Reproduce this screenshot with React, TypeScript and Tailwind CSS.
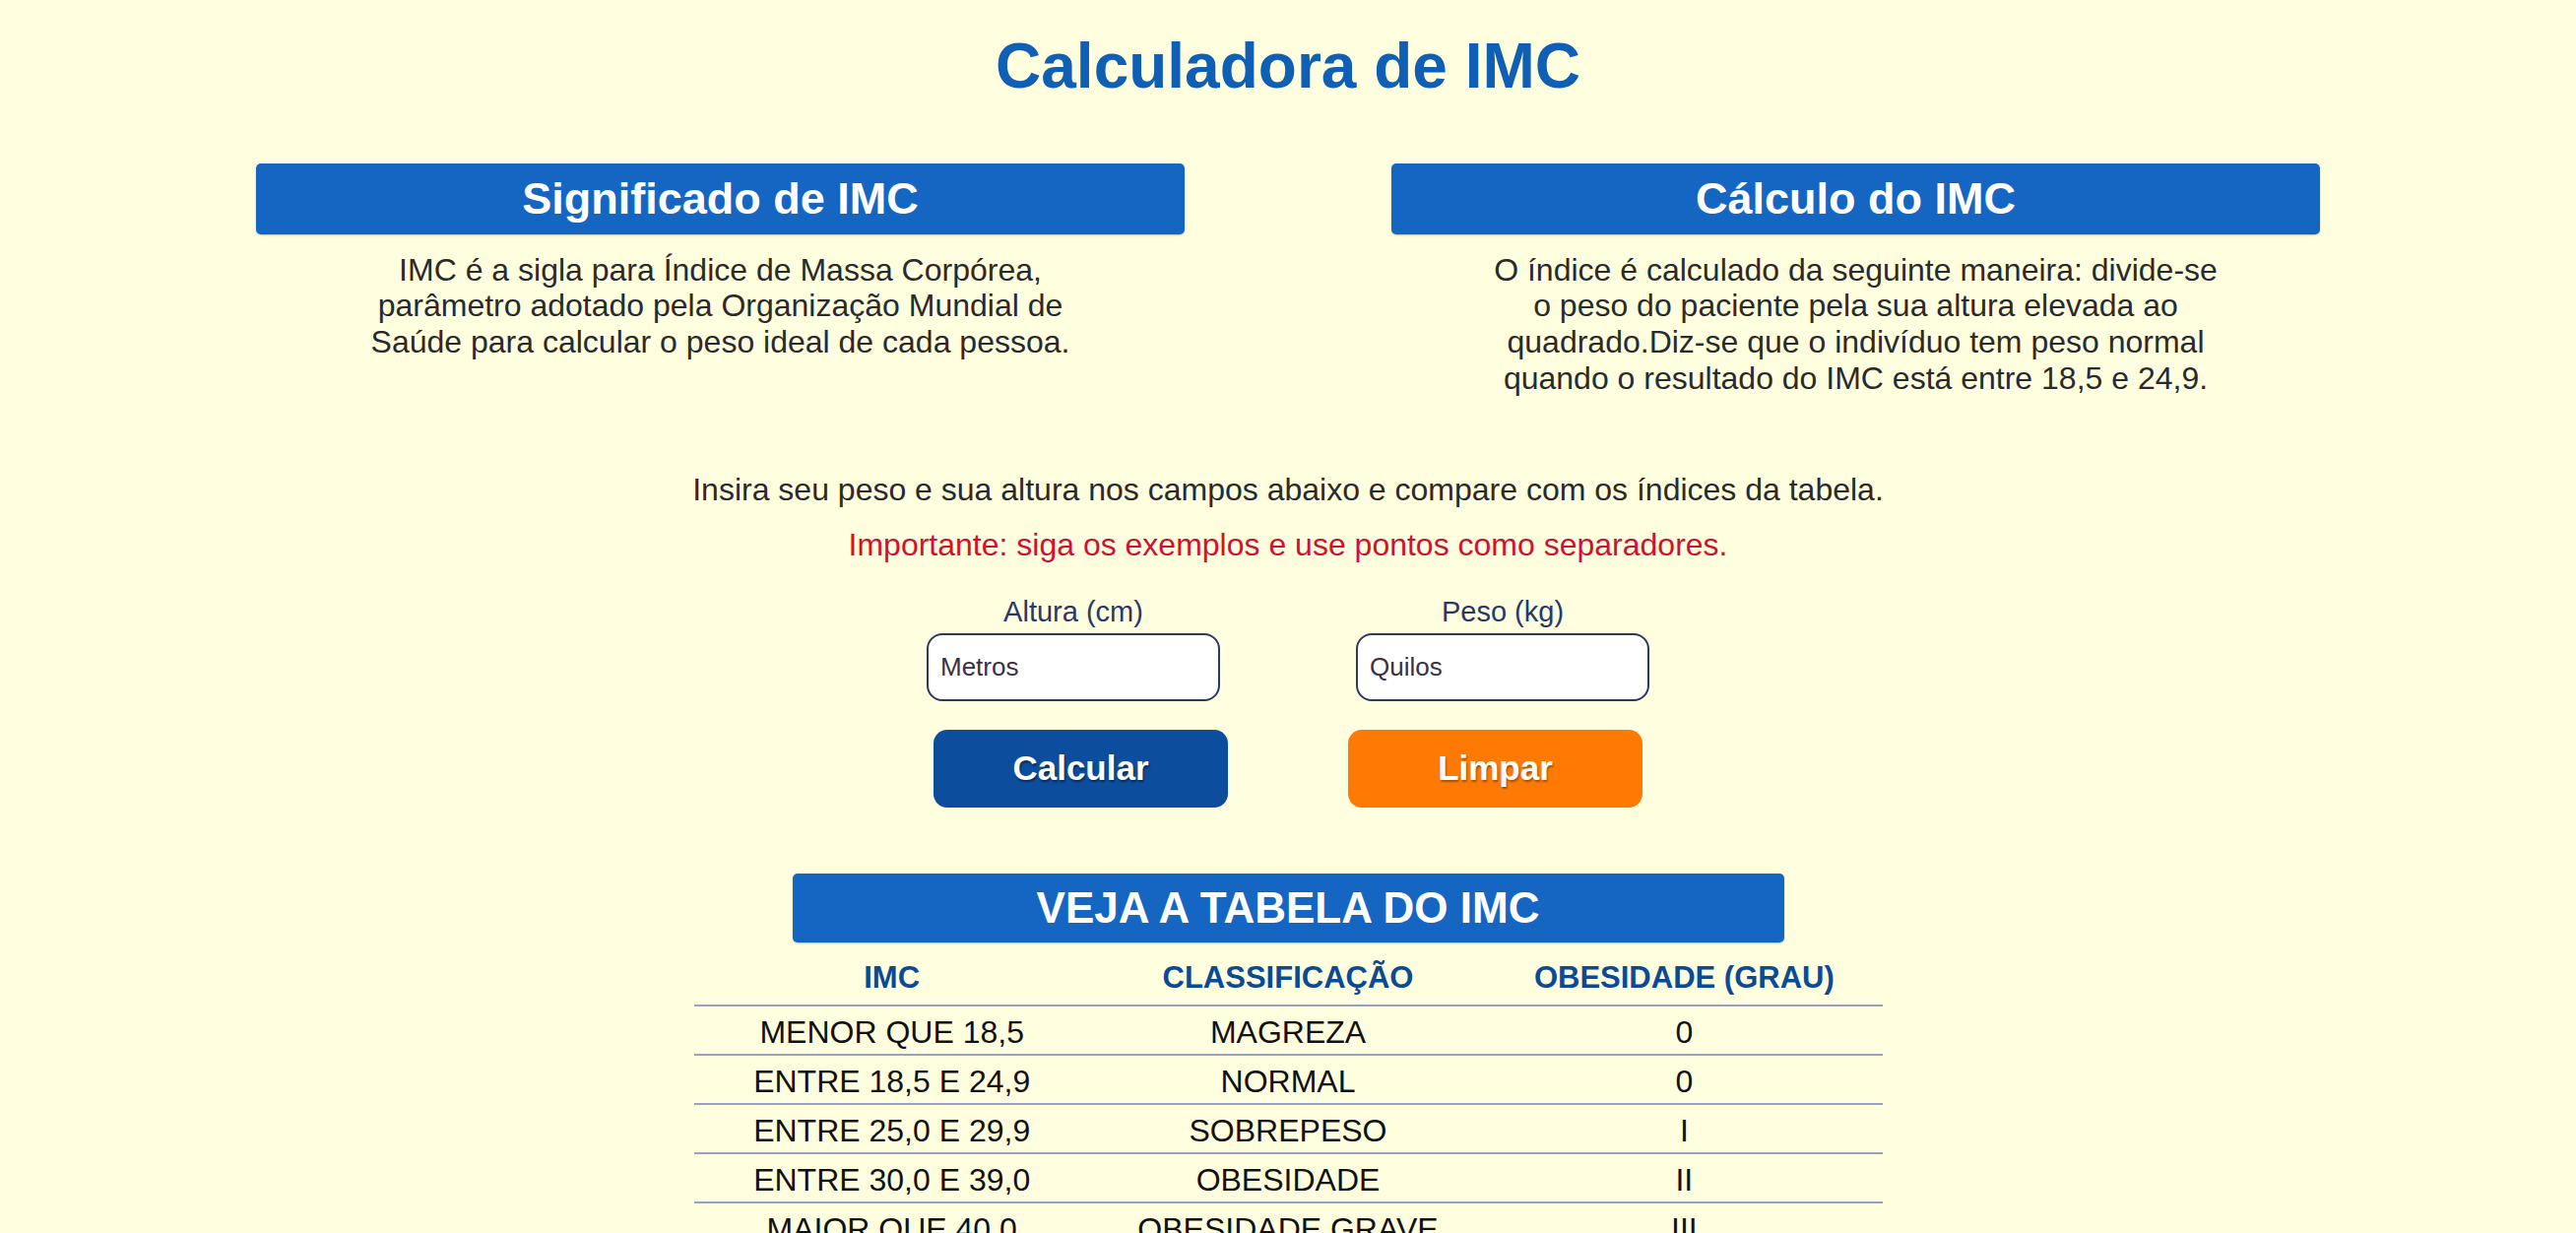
import { useState } from "react"

const faixas = [
  { imc: "MENOR QUE 18,5", classificacao: "MAGREZA", grau: "0" },
  { imc: "ENTRE 18,5 E 24,9", classificacao: "NORMAL", grau: "0" },
  { imc: "ENTRE 25,0 E 29,9", classificacao: "SOBREPESO", grau: "I" },
  { imc: "ENTRE 30,0 E 39,0", classificacao: "OBESIDADE", grau: "II" },
  { imc: "MAIOR QUE 40,0", classificacao: "OBESIDADE GRAVE", grau: "III" },
]

const SectionBar = ({ children, className = "" }: { children: React.ReactNode; className?: string }) => (
  <div
    className={
      "flex items-center justify-center rounded-[5px] bg-[#1566c2] font-bold text-white shadow-[0_1px_2px_rgba(0,0,0,0.25)] " +
      className
    }
  >
    {children}
  </div>
)

export default function App() {
  const [altura, setAltura] = useState("")
  const [peso, setPeso] = useState("")

  return (
    <div className="flex min-h-screen flex-col items-center bg-[#ffffe0] font-['Liberation_Sans',Arial,sans-serif]">
      <h1 className="mt-[31px] text-[64px] font-bold leading-[1.15] text-[#0f5fb4]">
        Calculadora de IMC
      </h1>

      <div className="mt-[61px] flex justify-center gap-[210px]">
        <section className="flex w-[943px] flex-col items-center">
          <SectionBar className="h-[72px] w-full text-[45px]">Significado de IMC</SectionBar>
          <p className="mt-[18px] max-w-[745px] text-center text-[32px] leading-[1.15] text-[#2a2a2a]">
            IMC é a sigla para Índice de Massa Corpórea, parâmetro adotado pela Organização Mundial de
            Saúde para calcular o peso ideal de cada pessoa.
          </p>
        </section>

        <section className="flex w-[943px] flex-col items-center">
          <SectionBar className="h-[72px] w-full text-[45px]">Cálculo do IMC</SectionBar>
          <p className="mt-[18px] max-w-[745px] text-center text-[32px] leading-[1.15] text-[#2a2a2a]">
            O índice é calculado da seguinte maneira: divide-se o peso do paciente pela sua altura elevada
            ao quadrado.Diz-se que o indivíduo tem peso normal quando o resultado do IMC está entre 18,5 e
            24,9.
          </p>
        </section>
      </div>

      <p className="mt-[76px] text-[32px] leading-[1.15] text-[#2a2a2a]">
        Insira seu peso e sua altura nos campos abaixo e compare com os índices da tabela.
      </p>
      <p className="mt-[19px] text-[32px] leading-[1.15] text-[#d3102f]">
        Importante: siga os exemplos e use pontos como separadores.
      </p>

      <div className="mt-[34px] flex gap-[138px]">
        <label className="flex w-[298px] flex-col items-center">
          <span className="text-[29px] leading-[1.15] text-[#283868]">Altura (cm)</span>
          <input
            value={altura}
            onChange={(e) => setAltura(e.target.value)}
            placeholder="Metros"
            className="mt-[4px] h-[69px] w-[298px] rounded-[16px] border-2 border-[#2c3763] bg-white px-[12px] text-[26px] text-[#222] outline-none placeholder:text-[#3a3045]"
          />
        </label>
        <label className="flex w-[298px] flex-col items-center">
          <span className="text-[29px] leading-[1.15] text-[#283868]">Peso (kg)</span>
          <input
            value={peso}
            onChange={(e) => setPeso(e.target.value)}
            placeholder="Quilos"
            className="mt-[4px] h-[69px] w-[298px] rounded-[16px] border-2 border-[#2c3763] bg-white px-[12px] text-[26px] text-[#222] outline-none placeholder:text-[#3a3045]"
          />
        </label>
      </div>

      <div className="mt-[29px] flex gap-[122px]">
        <button className="h-[79px] w-[299px] rounded-[14px] bg-[#0c4d9d] text-[35px] font-bold text-white [text-shadow:1px_2px_2px_rgba(0,0,0,0.45)]">
          Calcular
        </button>
        <button
          onClick={() => {
            setAltura("")
            setPeso("")
          }}
          className="h-[79px] w-[299px] rounded-[14px] bg-[#ff7a05] text-[35px] font-bold text-white [text-shadow:1px_2px_2px_rgba(0,0,0,0.35)]"
        >
          Limpar
        </button>
      </div>

      <SectionBar className="mt-[67px] h-[70px] w-[1007px] text-[44px]">VEJA A TABELA DO IMC</SectionBar>

      <div className="w-[1207px] text-center">
        <div className="grid grid-cols-3 border-b-2 border-[#96a2bf] pb-[10px] pt-[18px] text-[31px] font-bold leading-[1.15] text-[#0b4a94]">
          <span>IMC</span>
          <span>CLASSIFICAÇÃO</span>
          <span>OBESIDADE (GRAU)</span>
        </div>
        {faixas.map((f) => (
          <div
            key={f.imc}
            className="grid h-[50px] grid-cols-3 items-center border-b-2 border-[#96a2bf] pt-[4px] text-[32px] leading-[1.15] text-[#111]"
          >
            <span>{f.imc}</span>
            <span>{f.classificacao}</span>
            <span>{f.grau}</span>
          </div>
        ))}
      </div>
    </div>
  )
}
